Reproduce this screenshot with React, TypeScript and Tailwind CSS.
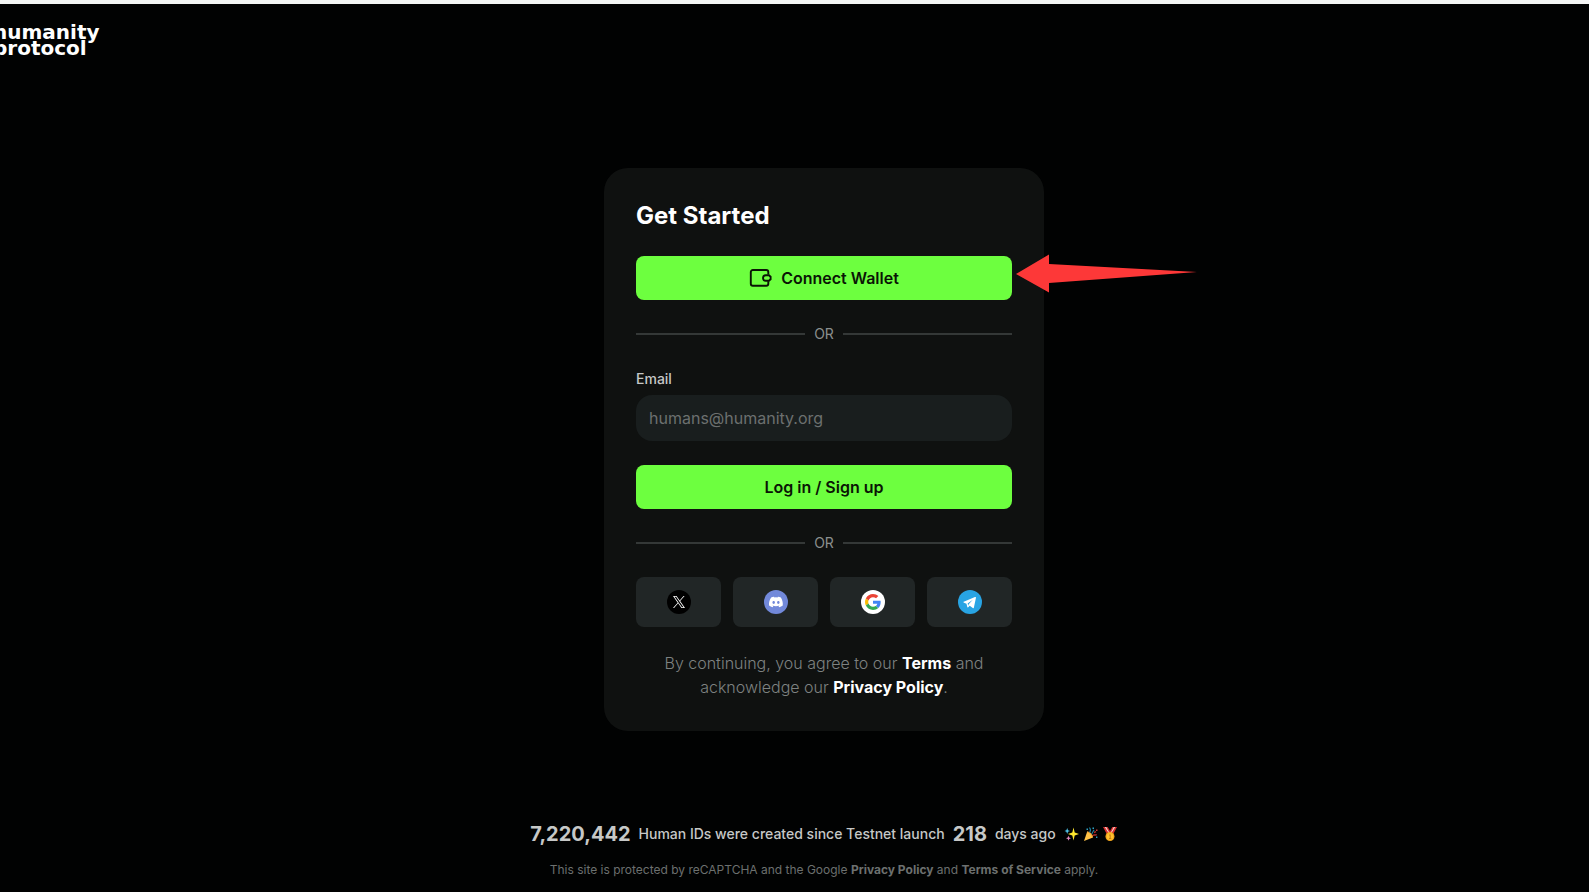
import { useState } from "react";
import type { ReactNode } from "react";

const Divider = () => (
  <div className="flex items-center gap-[9px] w-full">
    <div className="flex-1 h-0.5 bg-[#343837]" />
    <span className="text-[14px] leading-5 text-[#8b8f8e]">OR</span>
    <div className="flex-1 h-0.5 bg-[#343837]" />
  </div>
);

const WalletIcon = () => (
  <svg width="24" height="24" viewBox="0 0 24 24" fill="none" stroke="#0a1505" strokeWidth="1.9" aria-hidden="true">
    <path d="M19.3 8.6V6a2 2 0 0 0-2-2H3.8a2 2 0 0 0-2 2v11.8a2 2 0 0 0 2 2h13.5a2 2 0 0 0 2-2v-2.6" />
    <path d="M16.8 9.2h3.1l1.7 1.5v2.6l-1.7 1.5h-3.1a2.8 2.8 0 0 1 0-5.6z" />
  </svg>
);

const XIcon = () => (
  <svg width="24" height="24" viewBox="0 0 24 24" aria-hidden="true">
    <circle cx="12" cy="12" r="12" fill="#000" />
    <path
      transform="translate(6 6)"
      fill="#fff"
      d="M7.14 5.08 11.6 0h-1.06L6.67 4.41 3.57 0H0l4.68 6.67L0 12h1.06l4.1-4.66L8.42 12H12L7.14 5.08zM5.69 6.73l-.47-.67L1.44.78h1.62l3.05 4.27.48.67 3.96 5.54H8.93L5.69 6.73z"
    />
  </svg>
);

const DiscordIcon = () => (
  <svg width="24" height="24" viewBox="0 0 24 24" aria-hidden="true">
    <circle cx="12" cy="12" r="12" fill="#7289da" />
    <path
      transform="translate(5 5) scale(.5833)"
      fill="#fff"
      d="M20.32 4.37A19.8 19.8 0 0 0 15.43 2.85a.07.07 0 0 0-.08.04c-.21.38-.44.87-.61 1.25a18.3 18.3 0 0 0-5.49 0c-.16-.39-.4-.87-.62-1.25a.08.08 0 0 0-.08-.04A19.7 19.7 0 0 0 3.68 4.37C.53 9.05-.32 13.58.1 18.06a19.9 19.9 0 0 0 5.99 3.03c.46-.63.87-1.3 1.23-2a13 13 0 0 1-1.87-.89l.37-.29a14.2 14.2 0 0 0 12.06 0l.37.29c-.6.35-1.22.64-1.87.89.36.7.77 1.36 1.22 2a19.8 19.8 0 0 0 6-3.03c.5-5.18-.84-9.67-3.28-13.69zM8.02 15.33c-1.18 0-2.16-1.08-2.16-2.42s.96-2.42 2.16-2.42c1.21 0 2.18 1.1 2.16 2.42 0 1.34-.96 2.42-2.16 2.42zm7.97 0c-1.18 0-2.15-1.08-2.15-2.42s.95-2.42 2.15-2.42c1.22 0 2.18 1.1 2.16 2.42 0 1.34-.94 2.42-2.16 2.42z"
    />
  </svg>
);

const GoogleIcon = () => (
  <svg width="24" height="24" viewBox="0 0 24 24" aria-hidden="true">
    <circle cx="12" cy="12" r="12" fill="#fff" />
    <g transform="translate(4 4) scale(.3333)">
      <path fill="#EA4335" d="M24 9.5c3.54 0 6.71 1.22 9.21 3.6l6.85-6.85C35.9 2.38 30.47 0 24 0 14.62 0 6.51 5.38 2.56 13.22l7.98 6.19C12.43 13.72 17.74 9.5 24 9.5z" />
      <path fill="#4285F4" d="M46.98 24.55c0-1.57-.15-3.09-.38-4.55H24v9.02h12.94c-.58 2.96-2.26 5.48-4.78 7.18l7.73 6c4.51-4.18 7.09-10.36 7.09-17.65z" />
      <path fill="#FBBC05" d="M10.53 28.59A14.5 14.5 0 0 1 9.77 24c0-1.6.27-3.14.76-4.59l-7.98-6.19A23.9 23.9 0 0 0 0 24c0 3.88.92 7.54 2.56 10.78l7.97-6.19z" />
      <path fill="#34A853" d="M24 48c6.48 0 11.93-2.13 15.89-5.81l-7.73-6c-2.15 1.45-4.92 2.3-8.16 2.3-6.26 0-11.57-4.22-13.47-9.91l-7.98 6.19C6.51 42.62 14.62 48 24 48z" />
    </g>
  </svg>
);

const TelegramIcon = () => (
  <svg width="24" height="24" viewBox="0 0 24 24" aria-hidden="true">
    <circle cx="12" cy="12" r="12" fill="#28a4e4" />
    <path fill="#fff" d="M5.1 11.9 17 7.1c.6-.2 1.1.1.9.9l-2 9.5c-.1.7-.6.9-1.1.5l-3.1-2.3-1.5 1.5c-.4.4-.8.2-.9-.2l-.8-3.3-2.5-.9c-.7-.2-.7-.7 0-.9z" />
    <path fill="#28a4e4" d="m9.6 13.600 5.200-3.900-4.100 4.500-.4 1.600z" />
  </svg>
);

const Sparkles = () => (
  <svg width="16" height="16" viewBox="0 0 16 16" aria-hidden="true">
    <path fill="#ffe82e" d="m9.5 1.5 1.2 5.1L15 8l-4.3 1.4-1.2 5.1-1.2-5.1L4 8l4.3-1.4z" />
    <path fill="#4fc3e8" d="m3.2 2 .8 2.2 2 .8-2 .8L3.2 8l-.8-2.2L.5 5l1.9-.8z" />
    <path fill="#e58ac0" d="m4.5 9.8.7 1.8 1.8.7-1.8.7-.7 1.8-.7-1.8-1.8-.7 1.8-.7z" />
  </svg>
);

const Popper = () => (
  <svg width="16" height="16" viewBox="0 0 16 16" fill="none" aria-hidden="true">
    <path fill="#ffc247" d="M4.2 5.5 1 15l9-3.6C9.5 8 7.2 5.7 4.2 5.5z" />
    <path stroke="#f3932b" d="M4.3 6c2.5.3 4.900 2.600 5.300 5.200" />
    <path stroke="#1d86a3" strokeWidth="1.1" d="M6.500 6.500C8 4.800 7.600 3 6.500 1.500M8.500 8c1.500-1 1-2.800 2.700-4" />
    <path stroke="#b52d2d" strokeWidth="1.4" d="M10 9.500c1.200-1.400 2.400.4 3.700-1M11 6.500l2-.8" />
    <path fill="#2f9fc4" d="M3.5 2.5H5V4H3.500zM9.500 1.500H11V3H9.500zM13 10.500h1.400V12H13z" />
    <path fill="#c33b3b" d="M13 3.500h1.500V5H13z" />
  </svg>
);

const Medal = () => (
  <svg width="16" height="16" viewBox="0 0 16 16" aria-hidden="true">
    <path fill="#d92f2f" d="M1 1h14l-3.500 6.500h-7z" />
    <path fill="#010202" d="M5.700 1h4.600L8 5z" />
    <path fill="#f4d5d0" d="m2.800 1 3.700 6h1L4.200 1zM11.800 1 8.500 7h1l3.700-6z" />
    <circle cx="8" cy="10.500" r="4.500" fill="#f6a81c" />
    <circle cx="8" cy="10.500" r="3.200" fill="#ffc02e" />
    <path stroke="#c97c0e" fill="none" d="M7.200 9.200 8.200 8.700v3.500M7 12.500h2.300" />
  </svg>
);

const SOCIALS: { name: string; icon: ReactNode }[] = [
  { name: "X", icon: <XIcon /> },
  { name: "Discord", icon: <DiscordIcon /> },
  { name: "Google", icon: <GoogleIcon /> },
  { name: "Telegram", icon: <TelegramIcon /> },
];

const primaryButton =
  "flex justify-center items-center gap-2 w-full h-11 rounded-lg bg-[#6dff3f] hover:bg-[#5fea33] text-[16px] leading-6 font-semibold text-[#0a1505] cursor-pointer transition-colors";

export default function App() {
  const [email, setEmail] = useState("");

  return (
    <div className="min-h-screen flex flex-col bg-[#010202] border-t-4 border-[#f4f6f5] overflow-hidden font-['Inter',sans-serif]">
      {/* Header */}
      <header className="h-20 pt-5">
        <a href="#" className="inline-block -ml-[7px] font-['DejaVu_Sans',sans-serif] font-bold text-[20px] leading-4 text-white">
          humanity
          <br />
          protocol
        </a>
      </header>

      <main className="flex flex-col items-center pl-[59px] pt-[84px]">
        {/* Sign in card */}
        <form
          onSubmit={(e) => e.preventDefault()}
          className="w-full max-w-[440px] p-8 rounded-3xl bg-[#0f1110] flex flex-col gap-6"
        >
          <h1 className="font-bold text-[24px] leading-8 text-white">Get Started</h1>

          <div className="relative">
            <button type="button" className={primaryButton}>
              <WalletIcon />
              Connect Wallet
            </button>
            {/* Pointer to the wallet button */}
            <svg
              className="absolute left-full -top-0.5 ml-1 pointer-events-none"
              width="182"
              height="40"
              viewBox="0 0 182 40"
              aria-hidden="true"
            >
              <path fill="#fd3838" d="M0 20 33 .5V10l148 8L33 29v9.5z" />
            </svg>
          </div>

          <Divider />

          <div className="flex flex-col gap-1.5">
            <label htmlFor="email" className="font-medium text-[14px] leading-[21px] text-[#c6c8c7]">
              Email
            </label>
            <input
              id="email"
              type="email"
              value={email}
              onChange={(e) => setEmail(e.target.value)}
              placeholder="humans@humanity.org"
              className="w-full h-[46px] px-[13px] rounded-2xl bg-[#191e1e] text-[16px] leading-6 text-white placeholder:text-[#6c706f] outline-none"
            />
          </div>

          <button type="submit" className={primaryButton}>
            Log in / Sign up
          </button>

          <Divider />

          <div className="grid grid-cols-4 gap-3">
            {SOCIALS.map(({ name, icon }) => (
              <button
                key={name}
                type="button"
                aria-label={`Continue with ${name}`}
                className="flex justify-center items-center h-[50px] rounded-lg bg-[#212626] hover:bg-[#2b3131] cursor-pointer transition-colors"
              >
                {icon}
              </button>
            ))}
          </div>

          <p className="text-center font-light text-[16px] leading-6 text-[#7e8281]">
            By continuing, you agree to our{" "}
            <a href="#" className="font-bold text-white">Terms</a> and
            <br />
            acknowledge our{" "}
            <a href="#" className="font-bold text-white">Privacy Policy</a>.
          </p>
        </form>
      </main>

      {/* Stats */}
      <footer className="mt-auto pl-[59px] pb-3.5 flex flex-col items-center gap-3.5">
        <div className="flex items-center gap-2 font-medium text-[14px] leading-7 text-[#c6c8c7]">
          <span className="font-bold text-[20px]">7,220,442</span>
          <span>Human IDs were created since Testnet launch</span>
          <span className="font-bold text-[20px]">218</span>
          <span>days ago</span>
          <span className="flex gap-[3px]">
            <Sparkles />
            <Popper />
            <Medal />
          </span>
        </div>
        <p className="text-[12px] leading-4 text-[#6c706f]">
          This site is protected by reCAPTCHA and the Google{" "}
          <a href="#" className="font-bold">Privacy Policy</a> and{" "}
          <a href="#" className="font-bold">Terms of Service</a> apply.
        </p>
      </footer>
    </div>
  );
}
